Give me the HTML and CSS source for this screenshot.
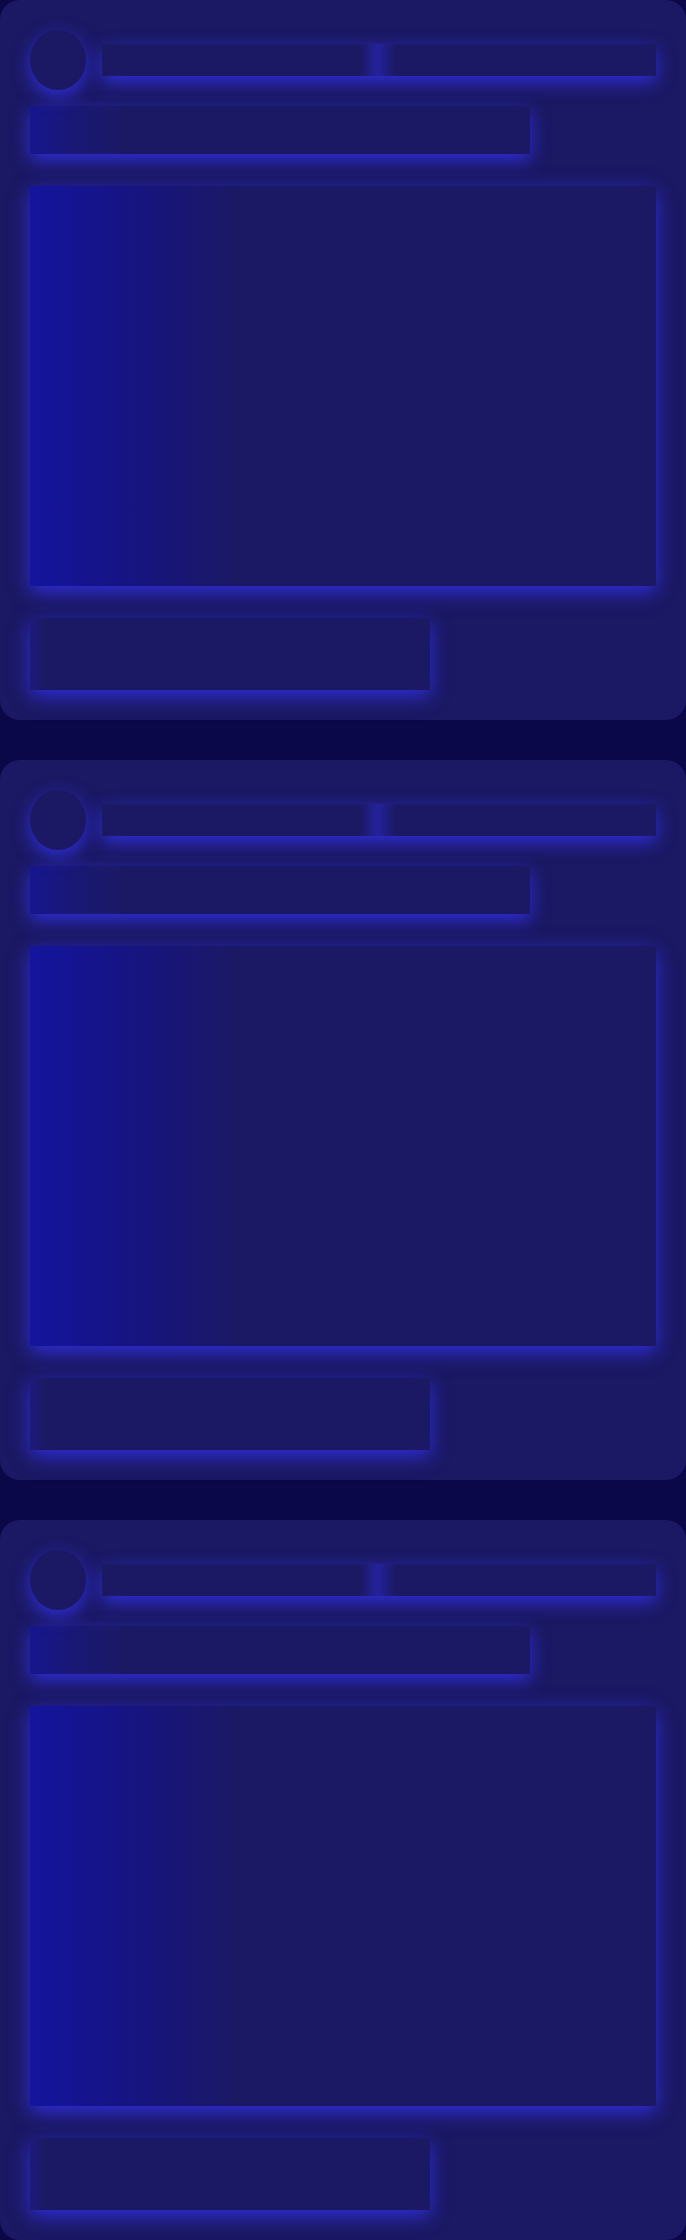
FILE: index.html
```html
<!DOCTYPE html>
<html lang="en">

<head>
    <meta charset="UTF-8">
    <meta name="viewport" content="width=device-width, initial-scale=1.0">
    <title>Feed loading</title>
    <link rel="stylesheet" href="styles.css">
</head>

<body>
    <main class="feed">
        <!-- skeleton card 1 -->
        <article class="card">
            <div class="head">
                <div class="bone avatar"></div>
                <div class="bone line"></div>
            </div>
            <div class="bone title"></div>
            <div class="bone media"></div>
            <div class="bone foot"></div>
        </article>

        <!-- skeleton card 2 -->
        <article class="card">
            <div class="head">
                <div class="bone avatar"></div>
                <div class="bone line"></div>
            </div>
            <div class="bone title"></div>
            <div class="bone media"></div>
            <div class="bone foot"></div>
        </article>

        <!-- skeleton card 3 -->
        <article class="card">
            <div class="head">
                <div class="bone avatar"></div>
                <div class="bone line"></div>
            </div>
            <div class="bone title"></div>
            <div class="bone media"></div>
            <div class="bone foot"></div>
        </article>
    </main>
</body>

</html>
```

FILE: styles.css
```css
body {
    background-color: #0a0848;
    margin: 0;
    padding: 0;
    font-family: "Roboto", Helvetica, Arial, sans-serif;
}

.feed {
    display: flex;
    flex-direction: column;
    gap: 40px;
}

.card {
    background-color: #1b1963;
    border-radius: 20px;
    padding: 30px;
    height: 720px;
    box-sizing: border-box;
}

.bone {
    background-color: #1b1963;
    box-shadow: 0 6px 18px rgba(50, 48, 230, 0.9);
}

.head {
    display: flex;
    align-items: center;
    gap: 16px;
    height: 60px;
}

.avatar {
    width: 56px;
    height: 60px;
    border-radius: 50%;
}

.line {
    flex: 1;
    height: 32px;
    background: linear-gradient(90deg, #1b1963 0%, #1b1963 46.5%, #24229c 49.8%, #1b1963 53%, #1b1963 100%);
}

.title {
    width: 500px;
    height: 48px;
    margin-top: 16px;
    background: linear-gradient(90deg, #17168f 0%, #191874 9%, #1b1963 20%, #1b1963 100%);
}

.media {
    height: 400px;
    margin-top: 32px;
    background: linear-gradient(90deg, #14149e 0%, #15148c 10%, #17157a 20%, #1b1963 34%, #1b1963 100%);
}

.foot {
    width: 400px;
    height: 72px;
    margin-top: 32px;
    background: linear-gradient(90deg, #1d1b7a 0%, #1b1963 4%, #1b1963 100%);
}
```
